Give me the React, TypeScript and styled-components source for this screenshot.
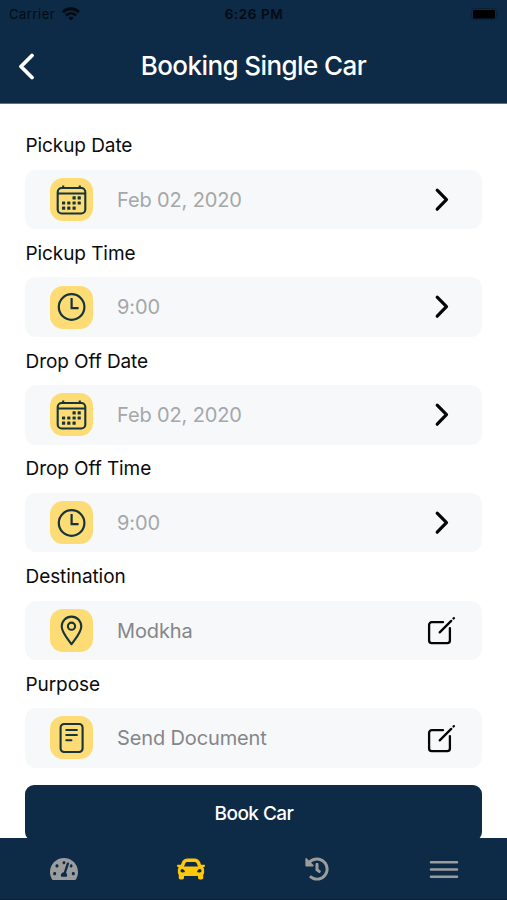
import React from "react";
import styled, { createGlobalStyle } from "styled-components";
import { FaCar, FaHistory, FaTachometerAlt } from "react-icons/fa";

const NAVY = "#0d2a46";
const INK = "#16343c";

const GlobalStyle = createGlobalStyle`
  * { box-sizing: border-box; }
  body { margin: 0; background: #fff; }
  button { font: inherit; border: 0; padding: 0; background: none; }
  svg { display: block; }
`;

const Screen = styled.div`
  width: 507px;
  height: 900px;
  display: flex;
  flex-direction: column;
  overflow: hidden;
  background: #fff;
  font-family: Inter, "Liberation Sans", sans-serif;
  color: #0b0b0b;
`;

const Header = styled.header`
  flex: none;
  height: 103px;
  background: ${NAVY};
  box-shadow: 0 1px 0 #5d7086;
`;

const StatusBar = styled.div`
  height: 28px;
  display: grid;
  grid-template-columns: 1fr auto 1fr;
  align-items: center;
  padding: 0 8px 0 9px;
  font-size: 13px;
  color: #030a12;
`;

const Carrier = styled.div`
  display: flex;
  align-items: center;
  gap: 7px;
  letter-spacing: 0.5px;
`;

const Clock = styled.div`
  font-weight: 600;
  font-size: 13.5px;
  letter-spacing: 0.6px;
`;

const Battery = styled.div`
  justify-self: end;
`;

const TitleBar = styled.div`
  height: 74px;
  display: grid;
  grid-template-columns: 60px 1fr 60px;
  align-items: center;
  color: #fff;
`;

const BackButton = styled.button`
  padding-left: 18px;
  padding-top: 2px;
  color: inherit;
`;

const Title = styled.h1`
  margin: 0;
  text-align: center;
  white-space: nowrap;
  font-size: 26px;
  font-weight: 450;
  letter-spacing: -0.58px;
`;

const Form = styled.main`
  flex: 1;
  min-height: 0;
  overflow: hidden;
  padding: 18.6px 25px 0;
`;

const Group = styled.section`
  height: 107.7px;
`;

const Label = styled.div`
  height: 48.2px;
  padding: 0.6px 0 0 0.5px;
  line-height: 48.2px;
  font-size: 19px;
  letter-spacing: -0.08px;
`;

const Field = styled.div`
  height: 59.5px;
  display: flex;
  align-items: center;
  padding: 0 24px 0 25px;
  border-radius: 11px;
  background: #f6f8fa;
`;

const Badge = styled.div`
  width: 43px;
  height: 43px;
  flex: none;
  display: grid;
  place-items: center;
  border-radius: 13px;
  background: #fddc75;
  color: ${INK};
`;

const Value = styled.span<{ $dark?: boolean }>`
  flex: 1;
  margin-left: 24px;
  padding-top: 0.5px;
  font-size: 20px;
  letter-spacing: -0.13px;
  color: ${(p) => (p.$dark ? "#858688" : "#a5a7a9")};
`;

const Action = styled.button`
  width: 34px;
  height: 34px;
  display: grid;
  place-items: center;
  color: #050505;
`;

const BookButton = styled.button`
  width: 100%;
  height: 56px;
  margin-top: 17px;
  padding: 1px 0 0 1px;
  border-radius: 9px;
  background: ${NAVY};
  color: #fff;
  font-size: 19px;
  font-weight: 450;
  letter-spacing: -0.55px;
`;

const TabBar = styled.nav`
  flex: none;
  height: 62px;
  display: grid;
  grid-template-columns: repeat(4, 1fr);
  padding-left: 1px;
  background: ${NAVY};
  border-bottom: 1px solid #08203a;
`;

const Tab = styled.button<{ $active?: boolean }>`
  display: grid;
  place-items: center;
  color: ${(p) => (p.$active ? "#fec70c" : "#9b9c9e")};
`;

const WifiIcon = () => (
  <svg width="18" height="14" viewBox="0 0 18 14" fill="none" stroke="currentColor" strokeWidth="2.9">
    <path d="M1 5.2C5.5.5 12.5.5 17 5.2" />
    <path d="M4 8.5c3-2.9 7-2.9 10 0" />
    <path d="M6.4 10.7c1.6-1.4 3.6-1.4 5.2 0L9 13.4z" fill="currentColor" stroke="none" />
  </svg>
);

const BatteryIcon = () => (
  <svg width="28" height="12" viewBox="0 0 28 12">
    <rect x=".5" y=".5" width="25" height="11" rx="3" fill="none" stroke="#0a2036" />
    <rect x="2" y="2" width="22" height="8.5" rx="1.3" fill="#000" />
    <path d="M26.7 4v4c1-.6 1-3.4 0-4z" fill="#0a2036" />
  </svg>
);

const BackIcon = () => (
  <svg width="17" height="27" viewBox="0 0 17 27" fill="none" stroke="currentColor" strokeWidth="3.8" strokeLinecap="round" strokeLinejoin="round">
    <path d="M14 2.5 3 13.5l11 11" />
  </svg>
);

const ChevronIcon = () => (
  <svg width="34" height="34" viewBox="0 0 34 34" fill="none" stroke="currentColor" strokeWidth="3.2" strokeLinecap="round" strokeLinejoin="round">
    <path d="m13.2 7.2 9.3 9.5-9.3 9.5" />
  </svg>
);

const EditIcon = () => (
  <svg width="34" height="34" viewBox="0 0 34 34" fill="none" stroke="currentColor" strokeWidth="2.3" strokeLinecap="round" strokeLinejoin="round">
    <path d="M19 9.2H7.7a2.6 2.6 0 0 0-2.6 2.6v15.7a2.6 2.6 0 0 0 2.6 2.6h15.6a2.6 2.6 0 0 0 2.6-2.6V15.1" />
    <path d="M15.7 19.4 27.2 7.9M29.5 5.5l.4-.4" />
  </svg>
);

const dots = [
  [18.1, 13.8], [23.2, 13.8],
  [7.6, 19], [12.8, 19], [18.1, 19], [23.2, 19],
  [7.6, 24.2], [12.8, 24.2], [18.1, 24.2],
];

const CalendarIcon = () => (
  <svg width="32" height="32" viewBox="0 0 32 32" fill="none" stroke="currentColor" strokeWidth="2.1">
    <rect x="1.7" y="4" width="27.6" height="25.5" rx="4" />
    <path d="M2 9.5h27M7.2 1.5V4M23.8 1.5V4" />
    {dots.map(([x, y]) => (
      <rect key={`${x}-${y}`} x={x - 1.6} y={y - 1.6} width="3.2" height="3.2" rx=".5" fill="currentColor" stroke="none" />
    ))}
  </svg>
);

const TimeIcon = () => (
  <svg width="30" height="30" viewBox="0 0 30 30" fill="none" stroke="currentColor" strokeWidth="2.2">
    <circle cx="14.6" cy="15" r="12.8" />
    <path d="M14.6 6v10.2h7" />
  </svg>
);

const PinIcon = () => (
  <svg width="26" height="32" viewBox="0 0 26 32" fill="none" stroke="currentColor" strokeWidth="2.1" strokeLinejoin="round">
    <path d="M12.5 30.2C9.5 25.7 2.7 18.4 2.7 12.4a9.8 9.8 0 0 1 19.6 0c0 6-6.8 13.3-9.8 17.8z" />
    <circle cx="12.5" cy="12.2" r="3.6" />
  </svg>
);

const DocumentIcon = () => (
  <svg width="26" height="32" viewBox="0 0 26 32" fill="none" stroke="currentColor" strokeWidth="2.1" strokeLinecap="round">
    <rect x="1.6" y="2" width="22" height="28" rx="3.5" />
    <path d="M7.3 8h10.6M7.3 13h10.6M7.3 18.2h5.1" />
  </svg>
);

const MenuIcon = () => (
  <svg width="30" height="20" viewBox="0 0 30 20" fill="none" stroke="currentColor" strokeWidth="2.6" strokeLinecap="round">
    <path d="M2 3.2h26M2 10.5h26M2 17.8h26" />
  </svg>
);

interface Item {
  label: string;
  value: string;
  Icon: React.FC;
  editable?: boolean;
}

const items: Item[] = [
  { label: "Pickup Date", value: "Feb 02, 2020", Icon: CalendarIcon },
  { label: "Pickup Time", value: "9:00", Icon: TimeIcon },
  { label: "Drop Off Date", value: "Feb 02, 2020", Icon: CalendarIcon },
  { label: "Drop Off Time", value: "9:00", Icon: TimeIcon },
  { label: "Destination", value: "Modkha", Icon: PinIcon, editable: true },
  { label: "Purpose", value: "Send Document", Icon: DocumentIcon, editable: true },
];

export default function App() {
  return (
    <Screen>
      <GlobalStyle />
      <Header>
        <StatusBar>
          <Carrier>Carrier <WifiIcon /></Carrier>
          <Clock>6:26 PM</Clock>
          <Battery><BatteryIcon /></Battery>
        </StatusBar>
        <TitleBar>
          <BackButton aria-label="Back"><BackIcon /></BackButton>
          <Title>Booking Single Car</Title>
        </TitleBar>
      </Header>
      <Form>
        {items.map(({ label, value, Icon, editable }) => (
          <Group key={label}>
            <Label>{label}</Label>
            <Field>
              <Badge><Icon /></Badge>
              <Value $dark={editable}>{value}</Value>
              <Action aria-label={label}>{editable ? <EditIcon /> : <ChevronIcon />}</Action>
            </Field>
          </Group>
        ))}
        <BookButton>Book Car</BookButton>
      </Form>
      <TabBar>
        <Tab aria-label="Dashboard"><FaTachometerAlt size={28} /></Tab>
        <Tab aria-label="Cars" $active><FaCar size={28} /></Tab>
        <Tab aria-label="History"><FaHistory size={24} /></Tab>
        <Tab aria-label="Menu"><MenuIcon /></Tab>
      </TabBar>
    </Screen>
  );
}
